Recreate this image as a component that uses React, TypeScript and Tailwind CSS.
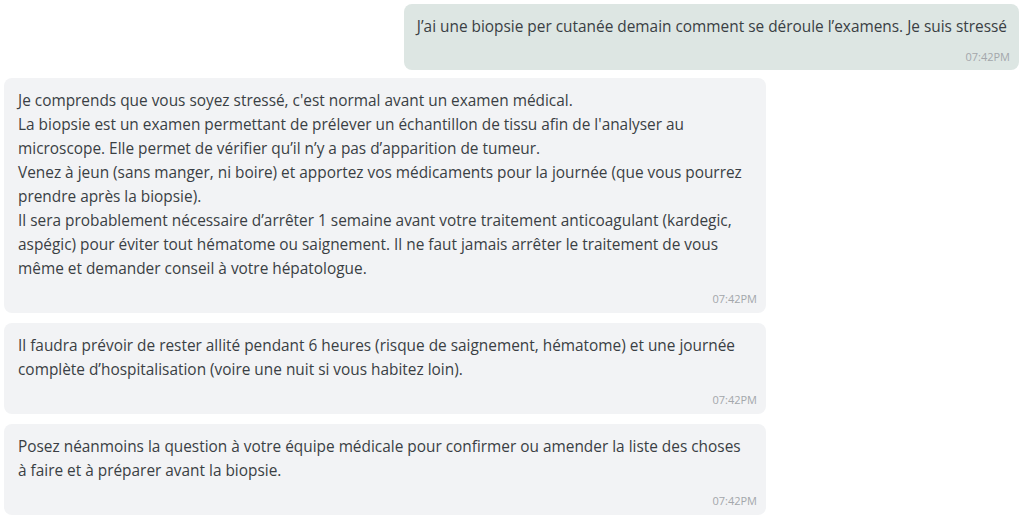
import React from "react";

const font = { fontFamily: '"Open Sans", "Noto Sans", sans-serif' };

function Time() {
  return (
    <div className="mt-[10px] text-right text-[11px] leading-[16px] text-[#a3a7ab]">07:42PM</div>
  );
}

export default function App() {
  const bot = [
    [
      "Je comprends que vous soyez stressé, c'est normal avant un examen médical.",
      "La biopsie est un examen permettant de prélever un échantillon de tissu afin de l'analyser au microscope. Elle permet de vérifier qu’il n’y a pas d’apparition de tumeur.",
      "Venez à jeun (sans manger, ni boire) et apportez vos médicaments pour la journée (que vous pourrez prendre après la biopsie).",
      "Il sera probablement nécessaire d’arrêter 1 semaine avant votre traitement anticoagulant (kardegic, aspégic) pour éviter tout hématome ou saignement. Il ne faut jamais arrêter le traitement de vous même et demander conseil à votre hépatologue.",
    ],
    [
      "Il faudra prévoir de rester allité pendant 6 heures (risque de saignement, hématome) et une journée complète d’hospitalisation (voire une nuit si vous habitez loin).",
    ],
    [
      "Posez néanmoins la question à votre équipe médicale pour confirmer ou amender la liste des choses à faire et à préparer avant la biopsie.",
    ],
  ];
  return (
    <div className="w-[1024px] h-[516px] bg-white overflow-hidden px-[4px] pt-[4px] flex flex-col gap-[10px]" style={font}>
      <div className="flex justify-end pr-[1px] mb-[-2px]">
        <div className="bg-[#dde6e3] rounded-[8px] pl-[13px] pr-[9px] pt-[11px] pb-[5px] max-w-[75%]">
          <div className="text-[15.4px] leading-[24px] text-[#3a3f44] pr-[3px]">
            J’ai une biopsie per cutanée demain comment se déroule l’examens. Je suis stressé
          </div>
          <Time />
        </div>
      </div>
      {bot.map((paras, i) => (
        <div key={i} className="flex">
          <div className="w-[762px] bg-[#f2f3f5] rounded-[8px] pl-[14px] pr-[9px] pt-[11px] pb-[6px]">
            <div className="text-[15.4px] leading-[24px] text-[#3a3f44] pr-[5px]">
              {paras.map((p, j) => (
                <div key={j}>{p}</div>
              ))}
            </div>
            <Time />
          </div>
        </div>
      ))}
    </div>
  );
}
